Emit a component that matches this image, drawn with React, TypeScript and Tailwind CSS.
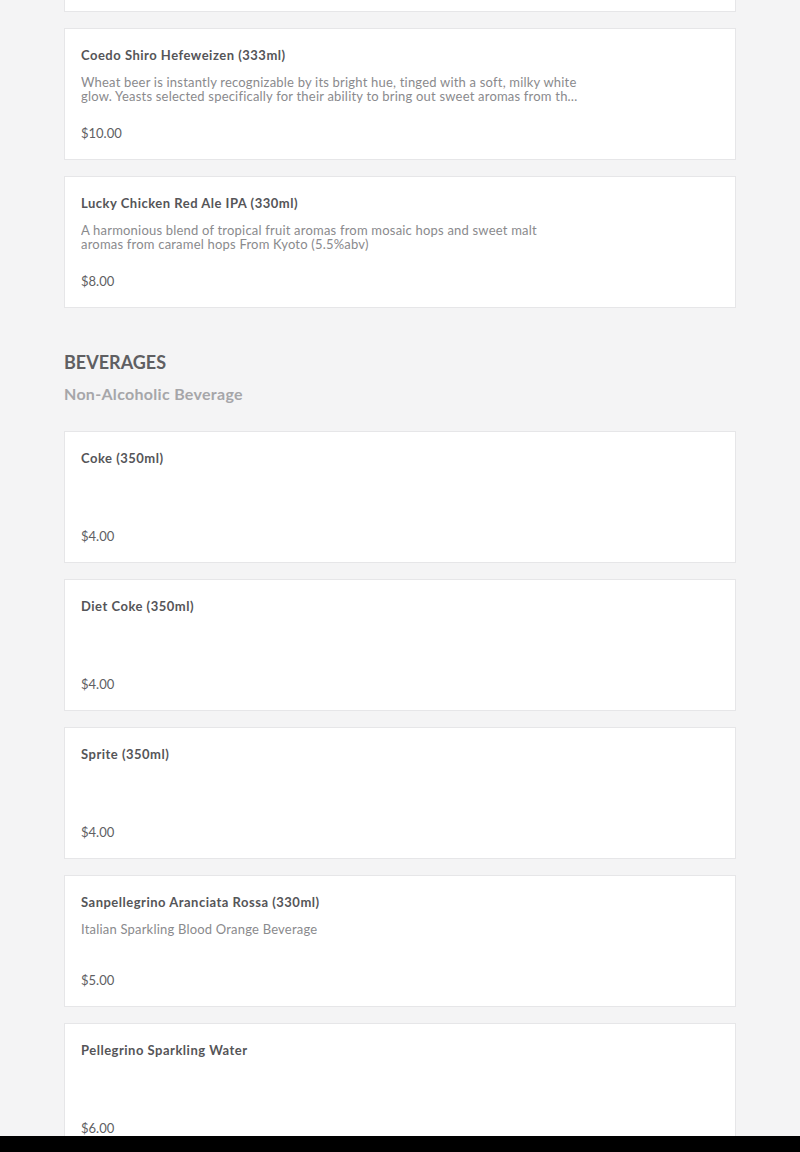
import React from "react";

type Item = { name: string; desc?: string; price: string };

const beers: Item[] = [
  { name: "Placeholder", price: "" },
  {
    name: "Coedo Shiro Hefeweizen (333ml)",
    desc: "Wheat beer is instantly recognizable by its bright hue, tinged with a soft, milky white glow. Yeasts selected specifically for their ability to bring out sweet aromas from the wheat malt give this beer its distinctive character.",
    price: "$10.00",
  },
  {
    name: "Lucky Chicken Red Ale IPA (330ml)",
    desc: "A harmonious blend of tropical fruit aromas from mosaic hops and sweet malt aromas from caramel hops From Kyoto (5.5%abv)",
    price: "$8.00",
  },
];

const beverages: Item[] = [
  { name: "Coke (350ml)", price: "$4.00" },
  { name: "Diet Coke (350ml)", price: "$4.00" },
  { name: "Sprite (350ml)", price: "$4.00" },
  { name: "Sanpellegrino Aranciata Rossa (330ml)", desc: "Italian Sparkling Blood Orange Beverage", price: "$5.00" },
  { name: "Pellegrino Sparkling Water", price: "$6.00" },
];

function Card({ item, hidden }: { item: Item; hidden?: boolean }) {
  return (
    <div className="h-[132px] bg-white border border-[#e6e6e8] px-4 pt-[16px] pb-[16px] flex flex-col">
      {!hidden && (
        <>
          <div className="text-[13px] leading-[20px] font-bold text-[#555558] tracking-[0.5px]">{item.name}</div>
          <div className="mt-[10px] w-[497px] text-[13px] leading-[14px] tracking-[0.2px] text-[#8a8a8d] line-clamp-2 min-h-[28px]">
            {item.desc}
          </div>
          <div className="mt-auto text-[13px] leading-[20px] text-[#606063]">{item.price}</div>
        </>
      )}
    </div>
  );
}

export default function App() {
  return (
    <div
      className="h-[1152px] w-[800px] flex flex-col overflow-hidden"
      style={{ fontFamily: "Lato, 'Noto Sans', sans-serif" }}
    >
      <div className="flex-1 overflow-hidden bg-[#f4f4f5]">
        <div className="mx-16 mt-[-120px] flex flex-col gap-4">
          {beers.map((b, i) => (
            <Card key={i} item={b} hidden={i === 0} />
          ))}
        </div>
        <div className="mx-16 mt-[42px]">
          <h2 className="text-[18px] leading-[24px] font-bold text-[#5f5f62]">BEVERAGES</h2>
          <h3 className="mt-[9px] text-[16px] leading-[22px] font-bold tracking-[0.3px] text-[#a6a6a9]">Non-Alcoholic Beverage</h3>
        </div>
        <div className="mx-16 mt-[26px] flex flex-col gap-4">
          {beverages.map((b, i) => (
            <Card key={i} item={b} />
          ))}
        </div>
      </div>
      <div className="h-4 bg-black shrink-0" />
    </div>
  );
}
